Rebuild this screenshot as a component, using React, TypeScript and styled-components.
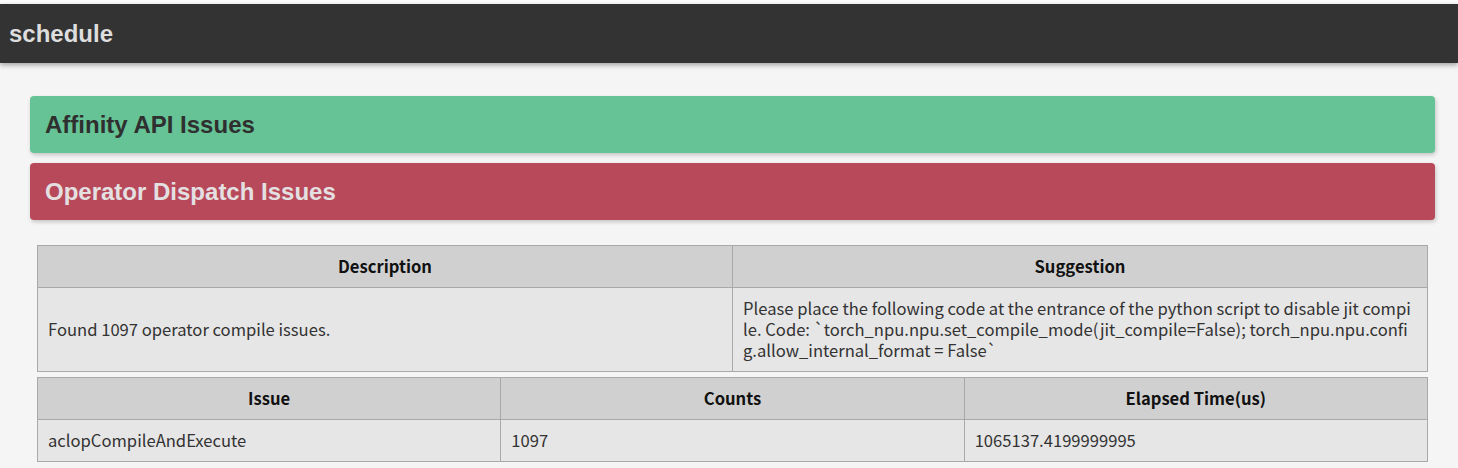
import React from 'react';
import styled, { createGlobalStyle } from 'styled-components';

const GlobalStyle = createGlobalStyle`
  html, body {
    margin: 0;
    padding: 0;
    background: #fdfdfd;
  }
  body {
    font-family: "Liberation Sans", Arial, sans-serif;
  }
`;

const Page = styled.div`
  padding-top: 4px;
  min-height: 464px;
  display: flex;
  flex-direction: column;
`;

const TopBar = styled.header`
  height: 59px;
  background: #333333;
  display: flex;
  align-items: center;
  padding-left: 9px;
  box-shadow: 0 2px 5px rgba(0, 0, 0, 0.35);
  position: relative;
  z-index: 1;
`;

const TopTitle = styled.h1`
  margin: 0;
  font-size: 24px;
  font-weight: 700;
  color: #dedede;
`;

const Content = styled.main`
  flex: 1;
  background: #f5f5f5;
  padding: 33px 23px 0 30px;
  display: flex;
  flex-direction: column;
`;

const Banner = styled.div<{ $tone: 'ok' | 'bad' }>`
  height: 57px;
  border-radius: 4px;
  background: ${p => (p.$tone === 'ok' ? '#65c395' : '#b7495a')};
  color: ${p => (p.$tone === 'ok' ? '#2f2f2f' : '#e4e0e2')};
  display: flex;
  align-items: center;
  padding-left: 15px;
  box-shadow: 1px 2px 4px rgba(0, 0, 0, 0.2);
  margin-bottom: 10px;
`;

const BannerTitle = styled.h2`
  margin: 0;
  font-size: 24px;
  font-weight: 700;
`;

const Tables = styled.div`
  margin: 15px 7px 0 7px;
  display: flex;
  flex-direction: column;
  gap: 5px;
`;

const Table = styled.table`
  width: 100%;
  border-collapse: collapse;
  table-layout: fixed;
  font-family: "Noto Sans CJK SC", "Liberation Sans", sans-serif;
  font-size: 16.6px;
  line-height: 21px;
`;

const Th = styled.th`
  background: #d0d0d0;
  border: 1px solid #a9a9a9;
  padding: 10px;
  font-weight: 700;
  color: #111;
  text-align: center;
`;

const Td = styled.td`
  background: #e6e6e6;
  border: 1px solid #a9a9a9;
  padding: 10px 12px 10px 10px;
  color: #333;
  text-align: left;
  word-break: break-all;
`;

const issues = [
  { issue: 'aclopCompileAndExecute', counts: '1097', elapsed: '1065137.4199999995' },
];

export default function App() {
  return (
    <>
      <GlobalStyle />
      <Page>
        <TopBar>
          <TopTitle>schedule</TopTitle>
        </TopBar>
        <Content>
          <Banner $tone="ok">
            <BannerTitle>Affinity API Issues</BannerTitle>
          </Banner>
          <Banner $tone="bad">
            <BannerTitle>Operator Dispatch Issues</BannerTitle>
          </Banner>
          <Tables>
            <Table>
              <thead>
                <tr>
                  <Th>Description</Th>
                  <Th>Suggestion</Th>
                </tr>
              </thead>
              <tbody>
                <tr>
                  <Td>Found 1097 operator compile issues.</Td>
                  <Td>
                    Please place the following code at the entrance of the python script to disable jit compile. Code: `torch_npu.npu.set_compile_mode(jit_compile=False); torch_npu.npu.config.allow_internal_format = False`
                  </Td>
                </tr>
              </tbody>
            </Table>
            <Table>
              <thead>
                <tr>
                  <Th>Issue</Th>
                  <Th>Counts</Th>
                  <Th>Elapsed Time(us)</Th>
                </tr>
              </thead>
              <tbody>
                {issues.map(row => (
                  <tr key={row.issue}>
                    <Td>{row.issue}</Td>
                    <Td>{row.counts}</Td>
                    <Td>{row.elapsed}</Td>
                  </tr>
                ))}
              </tbody>
            </Table>
          </Tables>
        </Content>
      </Page>
    </>
  );
}
